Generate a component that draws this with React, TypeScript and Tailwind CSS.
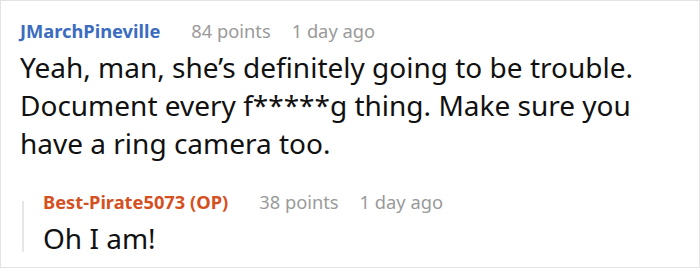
import React from "react";

export default function App() {
  return (
    <div
      className="w-[700px] h-[268px] bg-white border border-[#e3e3e3] overflow-hidden"
      style={{ fontFamily: '"Noto Sans", "Open Sans", sans-serif' }}
    >
      <div className="pt-[17px] pl-[19px]">
        <div className="flex items-baseline text-[18.3px] leading-[26px]">
          <span className="font-bold text-[#3b6cc0]">JMarchPineville</span>
          <span className="ml-[31px] text-[#9a9a9a]">84 points</span>
          <span className="ml-[21px] text-[#9a9a9a]">1 day ago</span>
        </div>
        <div className="mt-[4px] text-[28px] leading-[38px] text-[#111] w-[660px]">
          Yeah, man, she’s definitely going to be trouble. Document every f*****g thing. Make sure you have a ring camera too.
        </div>
        <div className="mt-[27px] flex">
          <div className="w-[2px] bg-[#e6e6e6] mt-[12px] mb-[5px] ml-[2px]" />
          <div className="pl-[19px]">
            <div className="flex items-baseline text-[18.3px] leading-[26px]">
              <span className="font-bold text-[#d4501f]">Best-Pirate5073 (OP)</span>
              <span className="ml-[31px] text-[#9a9a9a]">38 points</span>
              <span className="ml-[21px] text-[#9a9a9a]">1 day ago</span>
            </div>
            <div className="mt-[4px] text-[28px] leading-[38px] text-[#111]">Oh I am!</div>
          </div>
        </div>
      </div>
    </div>
  );
}
